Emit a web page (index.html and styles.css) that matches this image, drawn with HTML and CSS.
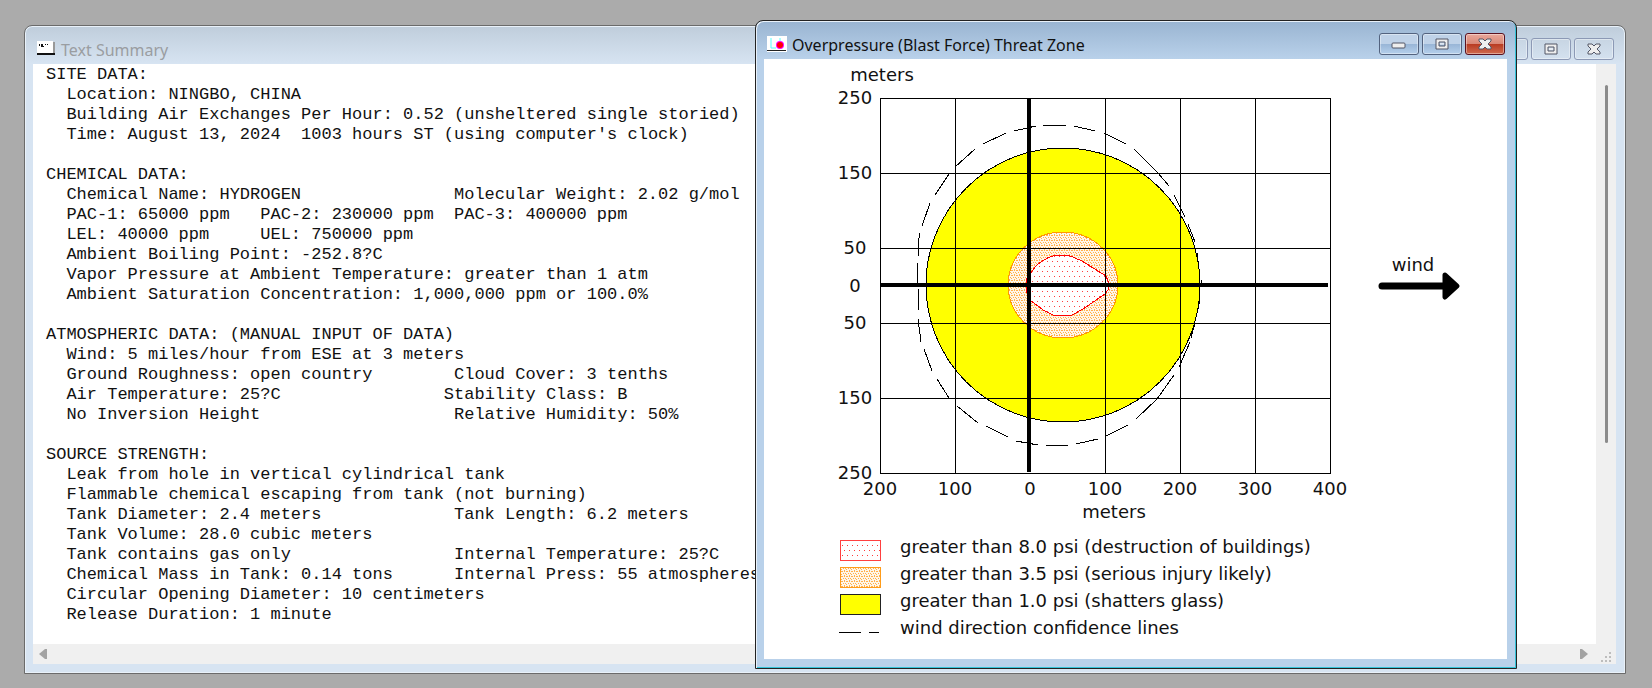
FILE: index.html
```html
<!DOCTYPE html>
<html lang="en">
<head>
    <meta charset="UTF-8">
    <meta name="viewport" content="width=device-width, initial-scale=1.0">
    <title>Overpressure Threat Zone</title>
    <link rel="stylesheet" href="styles.css">
</head>
<body>
    <main class="desktop">
        <section class="window summary-window">
            <header class="titlebar">
                <svg class="title-icon" width="20" height="16" viewBox="0 0 20 16">
                    <path fill="#fff" d="M1 0H17V12H1z"/>
                    <path fill="#999" d="M17 1H19V13H17z"/>
                    <path fill="#111" d="M1 12H19V14H1z"/>
                    <path fill="#111" d="M3 3H4V5H3zM5 3H7V6H5zM7 5H8V6H7zM9 3H10V4H9zM11 3H12V4H11z"/>
                </svg>
                <h1 class="title">Text Summary</h1>
                <div class="controls">
                    <button class="control" type="button" aria-label="Minimize">
                        <svg width="16" height="12" viewBox="0 0 16 12"><rect class="glyph" x="1" y="5" width="13" height="5" rx="1"/></svg>
                    </button>
                    <button class="control" type="button" aria-label="Maximize">
                        <svg width="16" height="12" viewBox="0 0 16 12"><path class="glyph" fill-rule="evenodd" d="M2 1H14V11H2zM5 4V8H11V4z"/><path class="glyph-slot" d="M6 6H10"/></svg>
                    </button>
                    <button class="control" type="button" aria-label="Close">
                        <svg width="16" height="12" viewBox="0 0 16 12"><path class="glyph" d="M2 1H6L8 3L10 1H14V3L11 6L14 9V11H10L8 9L6 11H2V9L5 6L2 3z"/></svg>
                    </button>
                </div>
            </header>
            <div class="summary">
<pre class="summary-text">SITE DATA:
  Location: NINGBO, CHINA
  Building Air Exchanges Per Hour: 0.52 (unsheltered single storied)
  Time: August 13, 2024  1003 hours ST (using computer's clock)

CHEMICAL DATA:
  Chemical Name: HYDROGEN	Molecular Weight: 2.02 g/mol
  PAC-1: 65000 ppm   PAC-2: 230000 ppm	PAC-3: 400000 ppm
  LEL: 40000 ppm     UEL: 750000 ppm
  Ambient Boiling Point: -252.8?C
  Vapor Pressure at Ambient Temperature: greater than 1 atm
  Ambient Saturation Concentration: 1,000,000 ppm or 100.0%

ATMOSPHERIC DATA: (MANUAL INPUT OF DATA)
  Wind: 5 miles/hour from ESE at 3 meters
  Ground Roughness: open country	Cloud Cover: 3 tenths
  Air Temperature: 25?C                Stability Class: B
  No Inversion Height	Relative Humidity: 50%

SOURCE STRENGTH:
  Leak from hole in vertical cylindrical tank
  Flammable chemical escaping from tank (not burning)
  Tank Diameter: 2.4 meters	Tank Length: 6.2 meters
  Tank Volume: 28.0 cubic meters
  Tank contains gas only	Internal Temperature: 25?C
  Chemical Mass in Tank: 0.14 tons	Internal Press: 55 atmospheres
  Circular Opening Diameter: 10 centimeters
  Release Duration: 1 minute</pre>
                <div class="scroll-y"><div class="thumb"></div></div>
                <div class="scroll-x">
                    <svg width="8" height="10" viewBox="0 0 8 10"><path fill="#a3a3a3" d="M8 0V10H6L0 5L6 0z"/></svg>
                    <svg width="8" height="10" viewBox="0 0 8 10"><path fill="#a3a3a3" d="M0 0V10H2L8 5L2 0z"/></svg>
                </div>
                <div class="grip">
                    <svg width="10" height="10" viewBox="0 0 10 10"><path fill="#bdbdbd" d="M8 0h2v2H8zM4 4h2v2H4zM8 4h2v2H8zM0 8h2v2H0zM4 8h2v2H4zM8 8h2v2H8z"/></svg>
                </div>
            </div>
        </section>

        <section class="window active zone-window">
            <header class="titlebar">
                <svg class="title-icon" width="20" height="16" viewBox="0 0 20 16">
                    <path fill="#fff" d="M0 0H20V16H0z"/>
                    <path stroke="#5ff" fill="none" d="M4 2V12M4 12H9M13 2V5"/>
                    <circle cx="13" cy="9" r="4" fill="#f0f"/>
                    <circle cx="13" cy="9" r="3" fill="#f00"/>
                    <path fill="#222" d="M0 14H19V15H0z"/>
                </svg>
                <h2 class="title">Overpressure (Blast Force) Threat Zone</h2>
                <div class="controls">
                    <button class="control" type="button" aria-label="Minimize">
                        <svg width="16" height="12" viewBox="0 0 16 12"><rect class="glyph" x="1" y="5" width="13" height="5" rx="1"/></svg>
                    </button>
                    <button class="control" type="button" aria-label="Maximize">
                        <svg width="16" height="12" viewBox="0 0 16 12"><path class="glyph" fill-rule="evenodd" d="M2 1H14V11H2zM5 4V8H11V4z"/><path class="glyph-slot" d="M6 6H10"/></svg>
                    </button>
                    <button class="control close" type="button" aria-label="Close">
                        <svg width="16" height="12" viewBox="0 0 16 12"><path class="glyph" d="M2 1H6L8 3L10 1H14V3L11 6L14 9V11H10L8 9L6 11H2V9L5 6L2 3z"/></svg>
                    </button>
                </div>
            </header>
            <div class="zone">
                <!-- origin is the release point, 3px = 4 meters -->
                <svg class="chart" width="742" height="466" viewBox="-265 -226 742 466">
                    <defs>
                        <pattern id="dots-red" width="5" height="10" patternUnits="userSpaceOnUse">
                            <path fill="#fff" d="M0 0H5V10H0z"/>
                            <path fill="#ff3c3c" d="M0 1h1v1H0zM3 6h1v1H3z"/>
                        </pattern>
                        <pattern id="dots-orange" width="5" height="5" patternUnits="userSpaceOnUse">
                            <path fill="#fff6ea" d="M0 0H5V5H0z"/>
                            <path fill="#ffb14d" d="M0 0h1v1H0zM2 0h2v1H2zM1 2h1v1H1zM4 2h1v1H4zM0 4h1v1H0zM2 3h1v1H2z"/>
                        </pattern>
                    </defs>
                    <g class="zones">
                        <circle cx="34" cy="0" r="137" fill="#ff0" stroke="#000"/>
                        <ellipse cx="34" cy="0" rx="55" ry="53" fill="url(#dots-orange)" stroke="#ff9900"/>
                        <path fill="url(#dots-red)" stroke="#f00" d="M3-14Q7-20 13-24T27-30H39L53-24L77-9L79-4V5L76 9L54 24L43 30H24L14 25L1 15L-3 5L-2-7z"/>
                    </g>
                    <path class="confidence" d="M14-160H37M45-159L66-154M75-152L97-141M105-136L129-112L140-99M145-90L156-68M159-61L166-43M168-32L171-8M172-5V2
                        M7-159L-15-154M-23-152L-46-141M-54-136L-74-118M-80-111L-94-90M-99-82L-107-59M-109-52L-111-42V-29M-112-22L-111-2
                        M-110 4L-111 26M-111 34L-108 57M-105 64L-97 86M-92 94L-80 113M-72 121L-51 138M-43 141L-21 152M-13 156L9 160
                        M17 161L39 160M47 159L69 154M77 151L99 140M107 134L128 114L145 90M150 82L161 57M162 53L166 38M168 28L171 15"/>
                    <path class="grid" d="M-149-187V189M-74-187V189M76-187V189M151-187V189M226-187V189M301-187V189M-149-187H301M-149-112H301M-149-37H301M-149 38H301M-149 113H301M-149 188H301"/>
                    <path class="axis" d="M0-187V187M-149 0H299"/>
                    <path class="wind-shaft" d="M353 1H416"/>
                    <path class="wind-head" d="M416-10L428 1L416 12z"/>
                    <g class="labels">
                        <text x="-147" y="-204">meters</text>
                        <text x="-174" y="-181">250</text>
                        <text x="-174" y="-106">150</text>
                        <text x="-174" y="-31">50</text>
                        <text x="-174" y="7">0</text>
                        <text x="-174" y="44">50</text>
                        <text x="-174" y="119">150</text>
                        <text x="-174" y="194">250</text>
                        <text x="-149" y="210">200</text>
                        <text x="-74" y="210">100</text>
                        <text x="1" y="210">0</text>
                        <text x="76" y="210">100</text>
                        <text x="151" y="210">200</text>
                        <text x="226" y="210">300</text>
                        <text x="301" y="210">400</text>
                        <text x="85" y="233">meters</text>
                        <text x="384" y="-14">wind</text>
                    </g>
                </svg>
                <ul class="legend">
                    <li><svg width="42" height="22"><rect x="1" y="1" width="40" height="20" fill="url(#dots-red)" stroke="#ff4040"/></svg>greater than 8.0 psi (destruction of buildings)</li>
                    <li><svg width="42" height="22"><rect x="1" y="1" width="40" height="20" fill="url(#dots-orange)" stroke="#ff9c1a"/></svg>greater than 3.5 psi (serious injury likely)</li>
                    <li><svg width="42" height="22"><rect x="1" y="1" width="40" height="20" fill="#ff0" stroke="#222"/></svg>greater than 1.0 psi (shatters glass)</li>
                    <li><svg width="42" height="22"><path class="grid" d="M0 12H22M30 12H40"/></svg>wind direction confidence lines</li>
                </ul>
            </div>
        </section>
    </main>
</body>
</html>
```
FILE: styles.css
```css
body {
    margin: 0;
    background-color: #ababab;
    color: #111;
    font-family: "Noto Sans", sans-serif;
}
.desktop {
    position: relative;
    min-height: 100vh;
    overflow: hidden;
}
.window {
    position: absolute;
    display: flex;
    flex-direction: column;
    box-sizing: border-box;
    padding: 0 9px 9px 8px;
    border: 1px solid #6b6b6b;
    border-radius: 8px 8px 0 0;
    background: linear-gradient(#bfcddb, #d7e4f2 38px);
    box-shadow: inset 0 0 0 1px #e9f1f9;
}
.summary-window {
    inset: 25px 26px 14px 24px;
}
.zone-window {
    inset: 20px 135px 19px 755px;
}
.active {
    border-color: #222;
    background: linear-gradient(#99b4d1, #b9d1ea 38px);
    box-shadow: inset 1px 1px 0 #e9f1f9, inset -1px -1px 0 #35c3d8;
}
.titlebar {
    display: flex;
    align-items: center;
    height: 38px;
    flex: none;
}
.title-icon {
    margin: 8px 5px 0 3px;
}
.title {
    flex: 1;
    margin: 10px 0 0;
    font-size: 16px;
    font-weight: normal;
    line-height: 20px;
    color: #9a9da1;
}
.active .title {
    color: #111;
}
.controls {
    display: flex;
    gap: 3px;
    padding: 8px 2px 0 0;
}
.control {
    display: flex;
    align-items: center;
    justify-content: center;
    width: 40px;
    height: 22px;
    padding: 0;
    border: 1px solid #8c99b5;
    border-radius: 3px;
    background: none;
    box-shadow: inset 0 0 0 1px rgba(255, 255, 255, 0.4);
}
.active .control {
    border-color: #53637f;
    background: linear-gradient(#bfd2e8 48%, #98b5d6 50%, #b5d0ec);
}
.active .close {
    border-color: #5b1220;
    background: linear-gradient(#e9a89b, #d98877 48%, #b83a21 50%, #cf6b50);
}
.glyph {
    fill: #eee;
    stroke: #535666;
}
.glyph-slot {
    stroke: #fff;
}
.summary {
    flex: 1;
    display: grid;
    grid-template-columns: 1fr 20px;
    grid-template-rows: 1fr 20px;
    background-color: #f0f0f0;
}
.summary-text {
    margin: 0;
    padding: 1px 0 0 13px;
    overflow: hidden;
    background-color: #fff;
    font-family: "Liberation Mono", "Courier New", monospace;
    font-size: 17px;
    line-height: 20px;
    tab-size: 408px;
}
.thumb {
    width: 3px;
    height: 358px;
    margin: 21px auto 0;
    border-radius: 2px;
    background-color: #8b8b8b;
}
.scroll-x {
    display: flex;
    align-items: center;
    justify-content: space-between;
    padding: 0 8px 0 6px;
}
.grip {
    display: flex;
    align-items: center;
    justify-content: center;
    padding-top: 6px;
}
.zone {
    flex: 1;
    overflow: hidden;
    background-color: #fff;
    font-family: "DejaVu Sans", Verdana, sans-serif;
    font-size: 18px;
}
.chart {
    display: block;
}
.confidence, .grid {
    fill: none;
    stroke: #000;
}
.zones, .confidence, .grid, .axis, .legend rect {
    shape-rendering: crispEdges;
}
.axis {
    stroke: #000;
    stroke-width: 4px;
}
.wind-shaft {
    stroke: #000;
    stroke-width: 7px;
    stroke-linecap: round;
}
.wind-head {
    stroke: #000;
    stroke-width: 5px;
    stroke-linejoin: round;
}
.labels {
    text-anchor: middle;
    fill: #111;
}
.legend {
    margin: 0;
    padding: 8px 0 0 75px;
    list-style: none;
}
.legend li {
    display: flex;
    align-items: center;
    gap: 19px;
    height: 27px;
}
.legend svg {
    margin-top: 6px;
}
```
